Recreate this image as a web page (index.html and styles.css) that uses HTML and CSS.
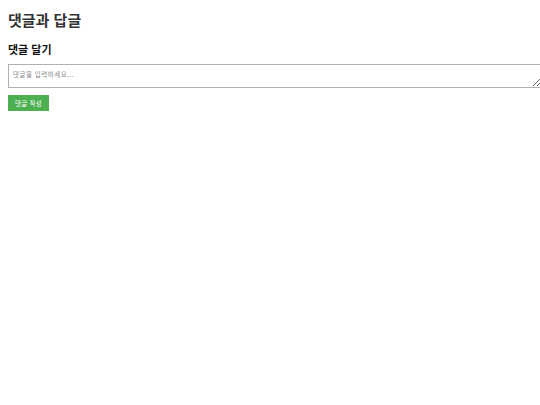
FILE: index.html
```html
<!DOCTYPE html>
<html lang="ko">
<head>
<meta charset="utf-8">
<title>댓글과 답글</title>
<link rel="stylesheet" href="styles.css">
</head>
<body>
<h1 class="page-title">댓글과 답글</h1>
<section class="comment-form">
  <h2 class="form-title">댓글 달기</h2>
  <textarea class="comment-input" placeholder="댓글을 입력하세요..."></textarea>
  <button class="submit-btn" type="button">댓글 작성</button>
</section>
</body>
</html>
```
FILE: styles.css
```css
html, body {
  margin: 0;
  padding: 0;
  background: #ffffff;
}
body {
  padding: 8px;
  font-family: "Noto Sans CJK KR", "Noto Sans", sans-serif;
  color: #333333;
  overflow: hidden;
}
.page-title {
  margin: 2px 0 0;
  font-size: 15px;
  line-height: 20px;
  font-weight: 700;
  color: #333333;
}
.comment-form {
  display: flex;
  flex-direction: column;
  align-items: flex-start;
}
.form-title {
  margin: 11px 0 0;
  font-size: 11px;
  line-height: 16px;
  font-weight: 700;
  color: #111111;
}
.comment-input {
  margin: 7px 0 0;
  width: 100%;
  height: 14px;
  padding: 4px;
  border: 1px solid #b0b0b0;
  font-family: "Noto Sans CJK KR", sans-serif;
  font-size: 6.5px;
  letter-spacing: 0.5px;
  line-height: 10px;
  resize: vertical;
}
.comment-input::placeholder {
  color: #8a8a8a;
}
.submit-btn {
  margin-top: 7px;
  width: 41px;
  height: 16px;
  padding: 0;
  border: none;
  background: #4caf50;
  color: #ffffff;
  font-family: "Noto Sans CJK KR", sans-serif;
  font-size: 6.5px;
  letter-spacing: 0.3px;
  line-height: 16px;
}
```
